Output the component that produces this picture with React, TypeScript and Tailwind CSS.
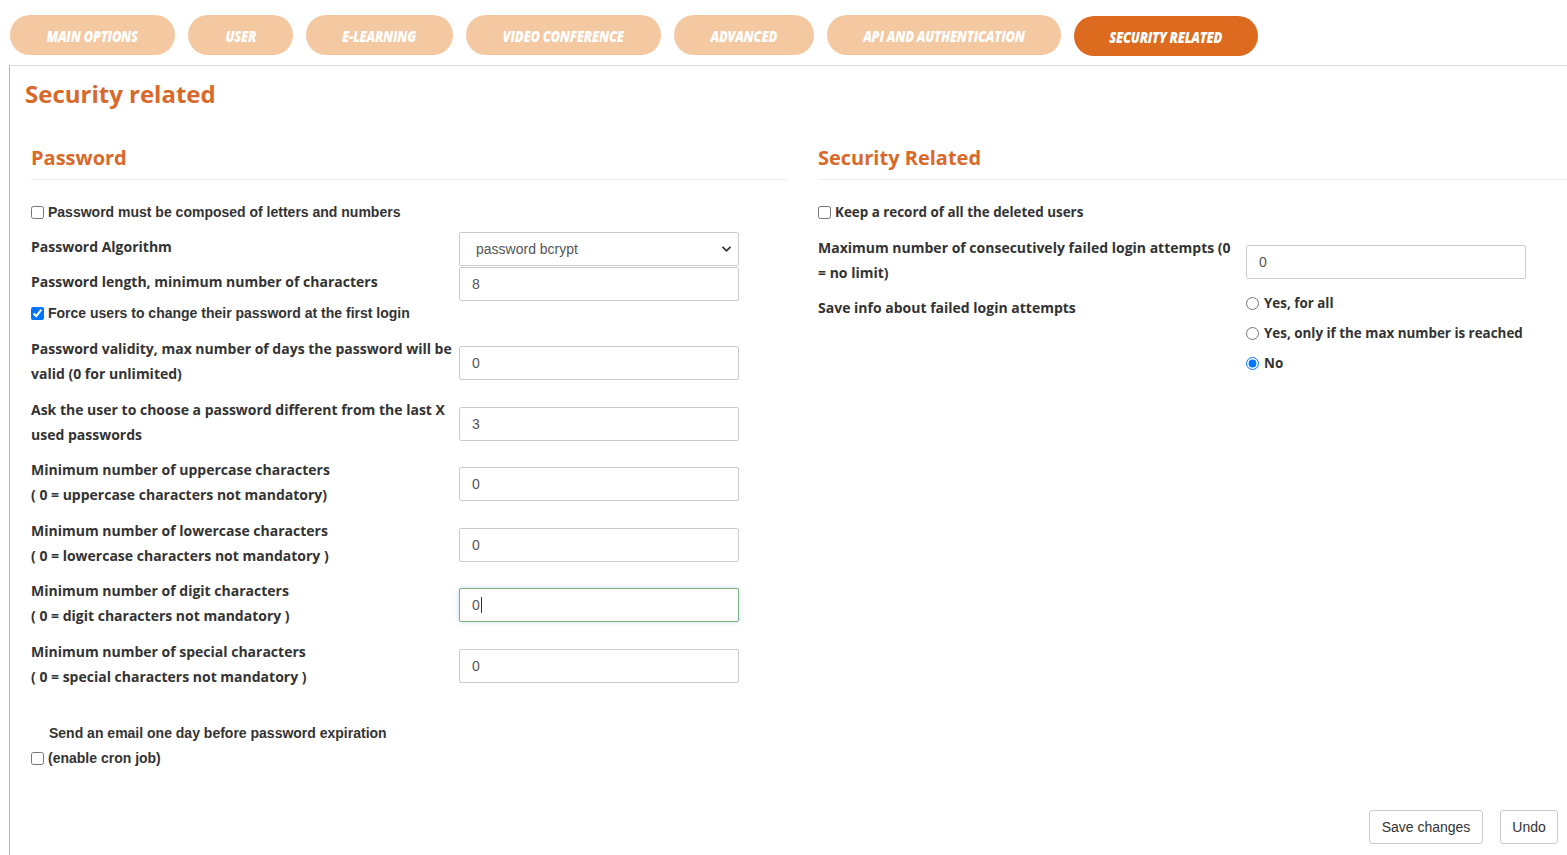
import React from "react";

const tabs = [
  { label: "MAIN OPTIONS", w: "w-[165px]" },
  { label: "USER", w: "w-[105px]" },
  { label: "E-LEARNING", w: "w-[147px]" },
  { label: "VIDEO CONFERENCE", w: "w-[195px]" },
  { label: "ADVANCED", w: "w-[140px]" },
  { label: "API AND AUTHENTICATION", w: "w-[234px]" },
];

function Check({ checked = false }: { checked?: boolean }) {
  return (
    <input
      type="checkbox"
      defaultChecked={checked}
      className="m-0 h-[13px] w-[13px] shrink-0"
    />
  );
}

function TextInput({ value }: { value: string }) {
  return (
    <input
      type="text"
      defaultValue={value}
      className="h-[34px] w-[280px] shrink-0 rounded-[2px] border border-[#cccccc] bg-white pl-[12px] font-['Liberation_Sans',Arial,sans-serif] text-[14px] text-[#555555] outline-none"
    />
  );
}

const lbl = "text-[14px] leading-[25px] font-bold text-[#333333]";
const lblSm = "text-[13.4px] leading-[25px] font-bold text-[#333333]";

function TwoLineRow({ l1, l2, value, focused = false }: { l1: string; l2: string; value: string; focused?: boolean }) {
  return (
    <div className="flex items-start">
      <div className={`w-[428px] shrink-0 ${lbl}`}>
        <div>{l1}</div>
        <div>{l2}</div>
      </div>
      <div className="mt-[10px]">
        {focused ? (
          <div className="flex h-[34px] w-[280px] items-center rounded-[2px] border border-[#7dae7d] bg-white pl-[12px] font-['Liberation_Sans',Arial,sans-serif] text-[14px] text-[#555555] shadow-[0_0_5px_rgba(120,180,230,0.45)]">
            0<span className="ml-[1px] inline-block h-[16px] w-[1px] bg-[#333333]" />
          </div>
        ) : (
          <TextInput value={value} />
        )}
      </div>
    </div>
  );
}

export default function App() {
  return (
    <div className="flex min-h-[855px] flex-col bg-white font-['Open_Sans',sans-serif] text-[#333333]">
      {/* Tabs */}
      <div className="flex items-start gap-[13px] pl-[10px] pt-[15px] pb-[9px]">
        {tabs.map((t) => (
          <div
            key={t.label}
            className={`${t.w} flex h-[40px] items-center justify-center rounded-full bg-[#f4c8a1] pt-[3px]`}
          >
            <span className="inline-block scale-x-[0.86] text-[15px] font-extrabold italic text-white tracking-[-0.3px]">
              {t.label}
            </span>
          </div>
        ))}
        <div className="mt-[1px] flex h-[40px] w-[184px] items-center justify-center rounded-full bg-[#dc6b1f] pt-[2px]">
          <span className="inline-block scale-x-[0.86] text-[15px] font-extrabold italic text-white tracking-[-0.3px]">
            SECURITY RELATED
          </span>
        </div>
      </div>

      {/* Panel */}
      <div className="ml-[9px] flex flex-1 flex-col border-l border-t border-l-[#b5b5b5] border-t-[#dddddd] pl-[15px]">
        <h1 className="mt-[12px] text-[24px] leading-[32px] font-bold text-[#d9692a]">Security related</h1>

        <div className="mt-[34px] flex gap-[31px] pl-[6px]">
          {/* Left column */}
          <div className="w-[756px] shrink-0">
            <h2 className="text-[20px] leading-[28px] font-bold text-[#d9692a]">Password</h2>
            <div className="mt-[7px] h-px bg-[#eeeeee]" />

            <label className="mt-[20px] flex h-[25px] items-center gap-[4px] font-['Liberation_Sans',Arial,sans-serif] text-[14px] font-bold text-[#333333]">
              <Check />
              <span>Password must be composed of letters and numbers</span>
            </label>

            <div className="mt-[7px] flex items-start">
              <div className={`w-[428px] shrink-0 pt-[2px] ${lbl}`}>Password Algorithm</div>
              <div className="relative">
                <select
                  defaultValue="bcrypt"
                  className="h-[34px] w-[280px] appearance-none rounded-[2px] border border-[#cccccc] bg-white pl-[16px] font-['Liberation_Sans',Arial,sans-serif] text-[14px] text-[#555555] outline-none"
                >
                  <option value="bcrypt">password bcrypt</option>
                </select>
                <svg
                  className="pointer-events-none absolute right-[7px] top-[13px]"
                  width="11"
                  height="8"
                  viewBox="0 0 11 8"
                  fill="none"
                >
                  <path d="M1.5 1.8L5.5 5.8L9.5 1.8" stroke="#333" strokeWidth="1.8" />
                </svg>
              </div>
            </div>

            <div className="mt-px flex items-start">
              <div className={`w-[428px] shrink-0 pt-[2px] ${lbl}`}>Password length, minimum number of characters</div>
              <TextInput value="8" />
            </div>

            <label className="flex h-[25px] items-center gap-[4px] font-['Liberation_Sans',Arial,sans-serif] text-[14px] font-bold text-[#333333]">
              <Check checked />
              <span>Force users to change their password at the first login</span>
            </label>

            <div className="mt-[10px] flex flex-col gap-[10.5px]">
              <TwoLineRow
                l1="Password validity, max number of days the password will be"
                l2="valid (0 for unlimited)"
                value="0"
              />
              <TwoLineRow l1="Ask the user to choose a password different from the last X" l2="used passwords" value="3" />
              <TwoLineRow
                l1="Minimum number of uppercase characters"
                l2="( 0 = uppercase characters not mandatory)"
                value="0"
              />
              <TwoLineRow
                l1="Minimum number of lowercase characters"
                l2="( 0 = lowercase characters not mandatory )"
                value="0"
              />
              <TwoLineRow
                l1="Minimum number of digit characters"
                l2="( 0 = digit characters not mandatory )"
                value="0"
                focused
              />
              <TwoLineRow
                l1="Minimum number of special characters"
                l2="( 0 = special characters not mandatory )"
                value="0"
              />
            </div>

            <div className="mt-[32px] font-['Liberation_Sans',Arial,sans-serif] text-[14px] font-bold leading-[25px] text-[#333333]">
              <div className="pl-[18px]">Send an email one day before password expiration</div>
              <label className="flex items-center gap-[4px]">
                <Check />
                <span>(enable cron job)</span>
              </label>
            </div>
          </div>

          {/* Right column */}
          <div className="min-w-0 flex-1">
            <h2 className="text-[20px] leading-[28px] font-bold text-[#d9692a]">Security Related</h2>
            <div className="mt-[7px] h-px bg-[#eeeeee]" />

            <label className={`mt-[20px] flex h-[25px] items-center gap-[4px] ${lblSm}`}>
              <Check />
              <span>Keep a record of all the deleted users</span>
            </label>

            <div className="mt-[10px] flex items-start">
              <div className={`w-[428px] shrink-0 pr-[6px] ${lbl}`}>
                Maximum number of consecutively failed login attempts (0 = no limit)
              </div>
              <div className="mt-[9.5px]">
                <TextInput value="0" />
              </div>
            </div>

            <div className="mt-[10px] flex items-start">
              <div className={`w-[428px] shrink-0 ${lbl}`}>Save info about failed login attempts</div>
              <div className={`-mt-[4px] flex flex-col gap-[5px] ${lblSm}`}>
                {[
                  { t: "Yes, for all", c: false },
                  { t: "Yes, only if the max number is reached", c: false },
                  { t: "No", c: true },
                ].map((r) => (
                  <label key={r.t} className="flex h-[25px] items-center gap-[5px]">
                    <input type="radio" name="failed" defaultChecked={r.c} className="m-0 h-[13px] w-[13px]" />
                    <span>{r.t}</span>
                  </label>
                ))}
              </div>
            </div>
          </div>
        </div>

        <div className="mt-auto flex justify-end gap-[17px] pb-[11px] pr-[9px]">
          <button className="h-[34px] w-[114px] rounded-[3px] border border-[#cccccc] bg-white font-['Liberation_Sans',Arial,sans-serif] text-[14px] text-[#333333]">
            Save changes
          </button>
          <button className="h-[34px] w-[58px] rounded-[3px] border border-[#cccccc] bg-white font-['Liberation_Sans',Arial,sans-serif] text-[14px] text-[#333333]">
            Undo
          </button>
        </div>
      </div>
    </div>
  );
}
